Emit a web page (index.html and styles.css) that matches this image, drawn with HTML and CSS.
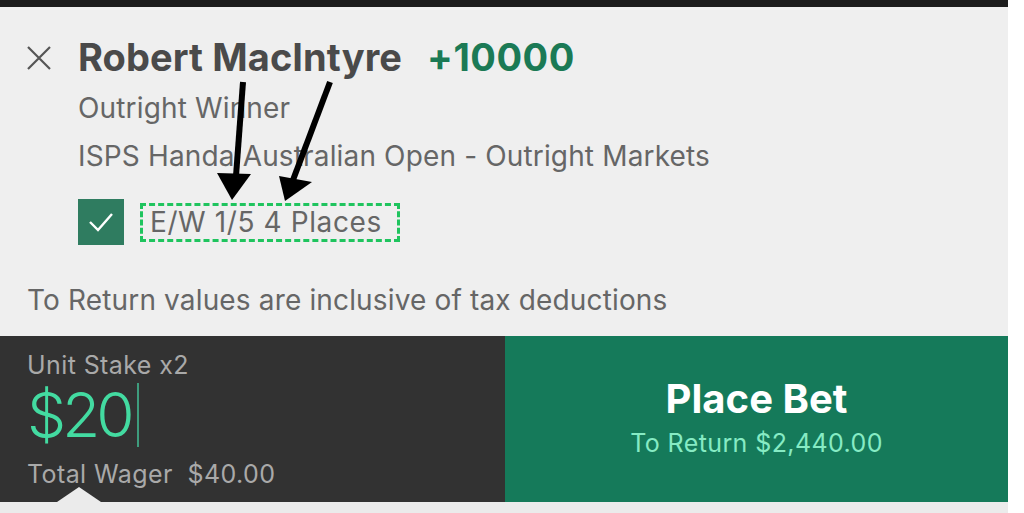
FILE: index.html
```html
<!DOCTYPE html>
<html lang="en">
<head>
<meta charset="utf-8">
<title>Bet Slip</title>
<link rel="stylesheet" href="styles.css">
</head>
<body>
<div class="sheet">
  <div class="topbar"></div>
  <div class="selection">
    <div class="bet-header">
      <svg class="close" width="26" height="26" viewBox="0 0 26 26" aria-label="Remove">
        <path d="M2 2 L24 24 M24 2 L2 24" stroke="#555" stroke-width="2.2" fill="none"/>
      </svg>
      <span class="name">Robert MacIntyre</span>
      <span class="odds">+10000</span>
    </div>
    <div class="sub">Outright Winner</div>
    <div class="sub">ISPS Handa Australian Open - Outright Markets</div>
    <div class="ew-row">
      <span class="checkbox">
        <svg width="28" height="22" viewBox="0 0 28 22">
          <path d="M3 11 L11 19 L25 3" stroke="#fff" stroke-width="2.4" fill="none"/>
        </svg>
      </span>
      <span class="ew-terms">E/W 1/5 4 Places</span>
    </div>
    <div class="tax-note">To Return values are inclusive of tax deductions</div>
    <svg class="arrows" width="1008" height="336" viewBox="0 0 1008 336">
      <line x1="243" y1="82" x2="236" y2="176" stroke="#000" stroke-width="6"/>
      <polygon points="217,173 251,174 232,200" fill="#000"/>
      <line x1="330" y1="82" x2="293" y2="180" stroke="#000" stroke-width="6"/>
      <polygon points="279,176 312,182 285,201" fill="#000"/>
    </svg>
  </div>
  <div class="stake-bar">
    <div class="stake">
      <div class="stake-label">Unit Stake x2</div>
      <div class="stake-input">$20<span class="caret"></span></div>
      <div class="stake-label">Total Wager&nbsp; $40.00</div>
      <span class="pointer"></span>
    </div>
    <div class="place-bet">
      <div class="place-title">Place Bet</div>
      <div class="place-return">To Return $2,440.00</div>
    </div>
  </div>
  <div class="bottom-strip"></div>
</div>
</body>
</html>
```

FILE: styles.css
```css
html, body {
  margin: 0;
  padding: 0;
  background: #ffffff;
}

body {
  font-family: Inter, Roboto, "Liberation Sans", Arial, sans-serif;
  width: 1024px;
  height: 513px;
  overflow: hidden;
}

.sheet {
  width: 1008px;
  display: flex;
  flex-direction: column;
}

.topbar {
  height: 7px;
  background: #1c1c1c;
}

.selection {
  position: relative;
  background: #efefef;
  padding: 26px 0 0 0;
  height: 303px;
  box-sizing: content-box;
}

.bet-header {
  display: flex;
  align-items: center;
  height: 48px;
  padding-left: 26px;
  margin-bottom: 3px;
}

.close {
  flex: none;
  margin-right: 26px;
  margin-top: 2px;
}

.name {
  font-size: 38px;
  font-weight: 700;
  color: #4a4a4a;
  line-height: 48px;
  letter-spacing: 0.1px;
}

.odds {
  font-size: 38px;
  font-weight: 700;
  color: #1b7a55;
  line-height: 48px;
  margin-left: 25px;
  letter-spacing: 0.5px;
}

.sub {
  padding-left: 78px;
  font-size: 28px;
  line-height: 48px;
  color: #666666;
  letter-spacing: 0.15px;
}

.ew-row {
  display: flex;
  align-items: center;
  padding-left: 78px;
  margin-top: 19px;
  height: 46px;
}

.checkbox {
  width: 46px;
  height: 46px;
  background: #2f7c60;
  display: flex;
  align-items: center;
  justify-content: center;
  flex: none;
}

.ew-terms {
  margin-left: 16px;
  height: 33px;
  width: 247px;
  box-sizing: content-box;
  border: 3px dashed #1fc45e;
  display: flex;
  align-items: center;
  padding-left: 7px;
  font-size: 28px;
  letter-spacing: 0.6px;
  color: #666666;
}

.tax-note {
  margin-top: 31px;
  padding-left: 27px;
  font-size: 28px;
  line-height: 48px;
  color: #666666;
  letter-spacing: 0.15px;
}

.arrows {
  position: absolute;
  left: 0;
  top: -7px;
  pointer-events: none;
}

.stake-bar {
  display: flex;
  height: 166px;
}

.stake {
  position: relative;
  width: 505px;
  background: #323232;
  padding: 12px 0 0 27px;
  box-sizing: border-box;
}

.stake-label {
  font-size: 25px;
  line-height: 34px;
  color: #a9a9a9;
  letter-spacing: 0.4px;
}

.stake-input {
  font-size: 62px;
  font-weight: 300;
  line-height: 66px;
  letter-spacing: -4px;
  color: #43dba1;
  display: flex;
  align-items: center;
  height: 66px;
  margin-bottom: 9px;
}

.caret {
  display: inline-block;
  width: 2px;
  height: 64px;
  background: #3e9c7d;
  margin-left: 6px;
}

.pointer {
  position: absolute;
  left: 57px;
  bottom: 0;
  width: 0;
  height: 0;
  border-left: 22px solid transparent;
  border-right: 22px solid transparent;
  border-bottom: 15px solid #ebebeb;
}

.place-bet {
  flex: 1;
  background: #157a5a;
  display: flex;
  flex-direction: column;
  align-items: center;
  padding-top: 39px;
  box-sizing: border-box;
}

.place-title {
  font-size: 40px;
  font-weight: 700;
  color: #ffffff;
  line-height: 48px;
}

.place-return {
  font-size: 25px;
  line-height: 40px;
  color: #86ebc4;
  letter-spacing: 0.4px;
}

.bottom-strip {
  height: 11px;
  background: #ebebeb;
}
```
